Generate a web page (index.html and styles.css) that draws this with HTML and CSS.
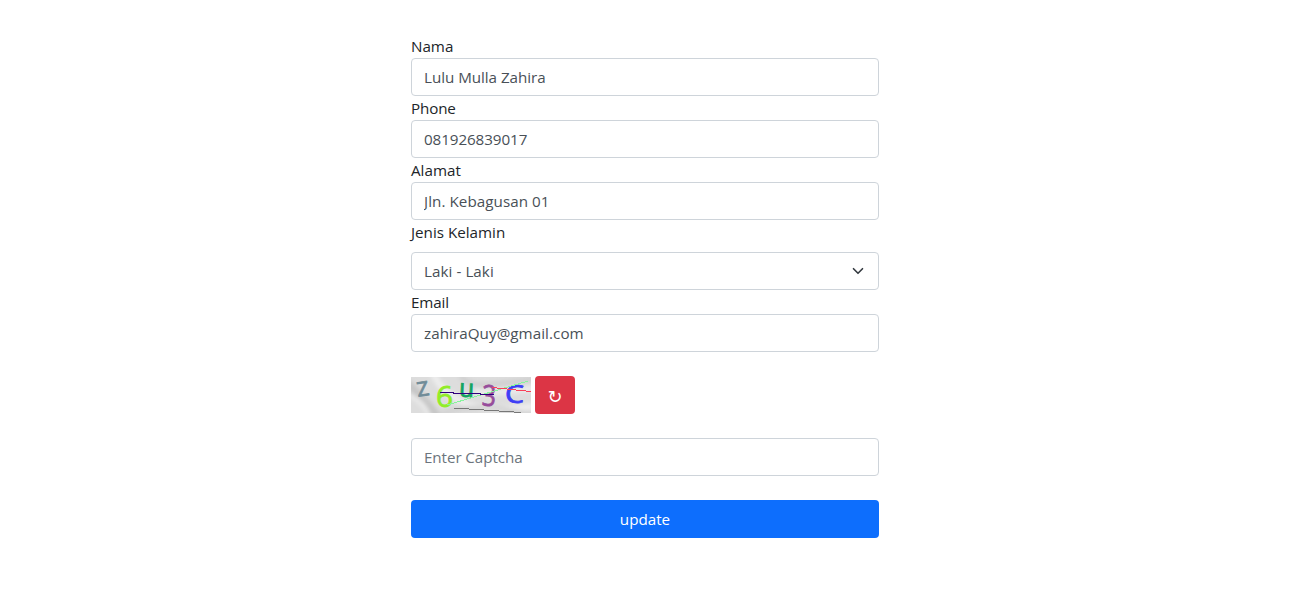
FILE: index.html
```html
<!DOCTYPE html>
<html lang="id">
<head>
<meta charset="utf-8">
<title>Update</title>
<link rel="stylesheet" href="styles.css">
</head>
<body>
<form class="form">
  <label class="label" for="nama">Nama</label>
  <input class="control" id="nama" type="text" value="Lulu Mulla Zahira">
  <label class="label label-tight" for="phone">Phone</label>
  <input class="control control-tight" id="phone" type="text" value="081926839017">
  <label class="label" for="alamat">Alamat</label>
  <input class="control control-wide" id="alamat" type="text" value="Jln. Kebagusan 01">
  <label class="label label-spaced" for="gender">Jenis Kelamin</label>
  <div class="control control-wide select" id="gender">
    <span>Laki - Laki</span>
    <svg class="chevron" viewBox="0 0 16 16"><path d="m2 5 6 6 6-6"/></svg>
  </div>
  <label class="label label-tight" for="email">Email</label>
  <input class="control control-wide" id="email" type="text" value="zahiraQuy@gmail.com">
  <div class="captcha">
    <svg class="captcha-image" viewBox="0 0 120 36">
      <defs>
        <filter id="soft" x="-20%" y="-50%" width="140%" height="200%"><feGaussianBlur stdDeviation="2"/></filter>
        <clipPath id="frame"><rect width="120" height="36"/></clipPath>
      </defs>
      <rect width="120" height="36" fill="#dddddd"/>
      <g clip-path="url(#frame)"><g filter="url(#soft)" fill="none">
        <path d="M-4 6Q12 20 27 40" stroke="#c6c6c6" stroke-width="8"/>
        <path d="M-2 18Q12 24 18 38" stroke="#ededed" stroke-width="4"/>
        <path d="M22 -3Q34 20 59 28T124 29" stroke="#eeeeee" stroke-width="6"/>
        <path d="M49 -2Q57 9 73 8T124 2" stroke="#cfcfcf" stroke-width="5"/>
        <path d="M64 14Q82 18 124 11" stroke="#ededed" stroke-width="5"/>
        <path d="M28 38Q64 23 122 38" stroke="#d0d0d0" stroke-width="4"/>
      </g></g>
      <g class="captcha-text">
        <text x="6" y="19" font-size="20" fill="#718c98" stroke="#718c98" transform="rotate(-9 11 13)" textLength="12" lengthAdjust="spacingAndGlyphs">Z</text>
        <text x="25" y="30" font-size="30" fill="#91ed28" stroke="#91ed28" textLength="17" lengthAdjust="spacingAndGlyphs">6</text>
        <text x="48" y="20" font-size="25" fill="#13a460" stroke="#13a460" transform="rotate(3 55 13)" textLength="15" lengthAdjust="spacingAndGlyphs">u</text>
        <text x="71" y="29" font-size="29" fill="#974c9b" stroke="#974c9b" transform="rotate(3 78 18)" textLength="14" lengthAdjust="spacingAndGlyphs">3</text>
        <text x="94" y="26" font-size="25" fill="#3e3ef5" stroke="#3e3ef5" textLength="19" lengthAdjust="spacingAndGlyphs">C</text>
      </g>
      <g fill="none" stroke-width="1">
        <path class="crisp" d="M36 28 117 4" stroke="#86f59c"/>
        <path class="crisp" d="M29 15.5H42V16.5H69V17.5H83" stroke="#30007e"/>
        <path class="crisp" d="M81 10.5 120 14.5" stroke="#fa4058"/>
        <path class="crisp" d="M43 31 110 35.5" stroke="#777"/>
      </g>
    </svg>
    <button class="refresh" type="button" aria-label="refresh">↻</button>
  </div>
  <input class="control control-tight" type="text" placeholder="Enter Captcha">
  <button class="submit" type="button">update</button>
</form>
</body>
</html>
```
FILE: styles.css
```css
* { box-sizing: border-box; }

body {
  margin: 0;
  padding: 34px 13px 0 0;
  background: #fff;
  color: #212529;
  font: 15.2px/24px "Open Sans", "Noto Sans", sans-serif;
}

.form {
  display: flex;
  flex-direction: column;
  width: 468px;
  margin: 0 auto;
}

.label { display: block; height: 24px; line-height: 25px; }
.label-tight { letter-spacing: -0.15px; }
.label-spaced { margin-bottom: 8px; }

.control {
  display: block;
  width: 100%;
  height: 38px;
  padding: 6px 12px;
  border: 1px solid #ced4da;
  border-radius: 4px;
  background: #fff;
  color: #495057;
  font: inherit;
  letter-spacing: -0.04px;
  outline: none;
}

.control-tight { letter-spacing: -0.08px; }
.control-wide { letter-spacing: 0.06px; }
.control::placeholder { color: #6c757d; opacity: 1; }

.select {
  display: flex;
  align-items: center;
  justify-content: space-between;
}

.chevron {
  width: 16px;
  height: 12px;
  fill: none;
  stroke: #343a40;
  stroke-width: 2.2;
  stroke-linecap: round;
  stroke-linejoin: round;
}

.captcha {
  display: flex;
  align-items: center;
  gap: 4px;
  margin: 24px 0;
}

.captcha-image { display: block; width: 120px; height: 36px; overflow: visible; }
.captcha-text { font-family: "Open Sans", sans-serif; stroke-width: 0.8; }
.crisp { shape-rendering: crispEdges; }

.refresh {
  width: 40px;
  height: 38px;
  padding: 3px 0 0;
  border: 0;
  border-radius: 4px;
  background: #dc3545;
  color: #fff;
  font: 18px/24px "DejaVu Sans", sans-serif;
}

.submit {
  height: 38px;
  margin-top: 24px;
  padding: 0 0 1px;
  border: 0;
  border-radius: 4px;
  background: #0d6efd;
  color: #fff;
  font: inherit;
}
```
